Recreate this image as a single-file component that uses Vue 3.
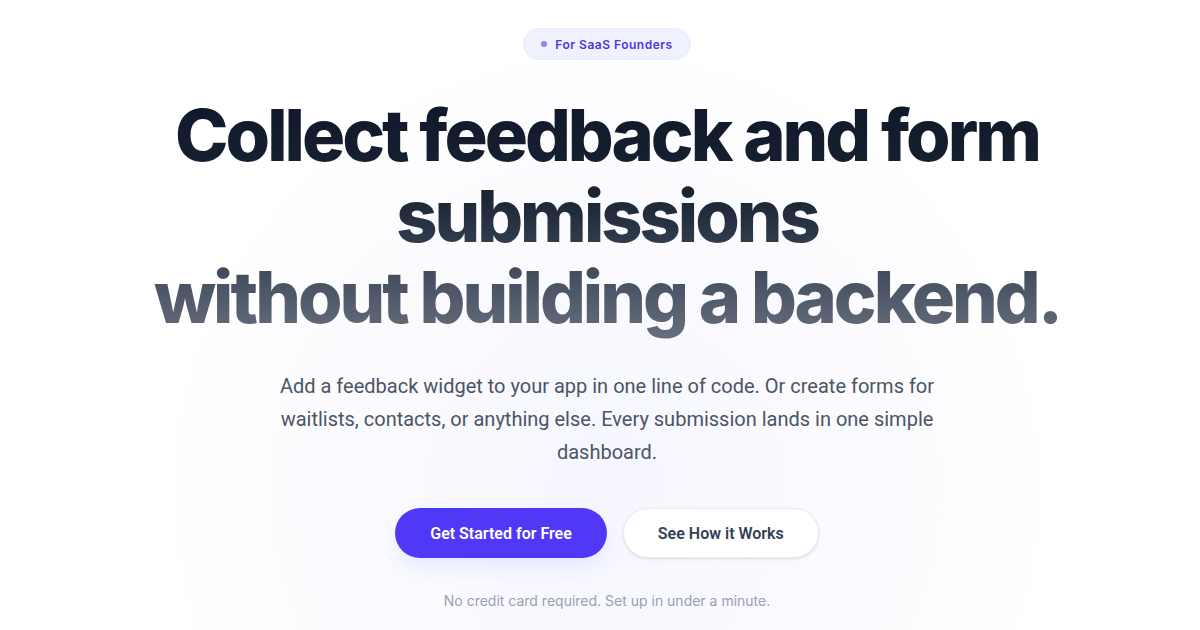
<script setup>
import { ref } from "vue";

const badge = ref("For SaaS Founders");
const note = ref("No credit card required. Set up in under a minute.");
</script>

<template>
    <main class="hero">
        <div class="badge">
            <span class="dot"></span>
            {{ badge }}
        </div>

        <h1>
            <span class="line">Collect feedback and form submissions</span>
            <span class="line">without building a backend.</span>
        </h1>

        <p class="lead">
            Add a feedback widget to your app in one line of code. Or create forms for waitlists,
            contacts, or anything else. Every submission lands in one simple dashboard.
        </p>

        <div class="actions">
            <button type="button" class="btn primary">Get Started for Free</button>
            <button type="button" class="btn secondary">See How it Works</button>
        </div>

        <p class="note">{{ note }}</p>
    </main>
</template>

<style>
body {
    margin: 0;
    background: #ffffff;
}
</style>

<style scoped>
.hero {
    display: flex;
    flex-direction: column;
    align-items: center;
    box-sizing: border-box;
    min-height: 100vh;
    padding: 28px 120px 20px 134px;
    overflow: hidden;
    font-family: Inter, sans-serif;
    text-align: center;
    background: radial-gradient(circle 460px at 50.5% 490px, #f6f6ff 0%, #fafaff 50%, #ffffff 100%);
}

.badge {
    display: flex;
    align-items: center;
    gap: 8px;
    box-sizing: border-box;
    height: 32px;
    padding: 0 17px;
    border: 1px solid #e6edff;
    border-radius: 16px;
    background: #eef2ff;
    color: #4f39d6;
    font-size: 12px;
    font-weight: 600;
    letter-spacing: 0.5px;
}

.dot {
    width: 6px;
    height: 6px;
    border-radius: 50%;
    background: #8f83f5;
}

h1 {
    max-width: 940px;
    margin: 34px 0 0;
    padding-bottom: 8px;
    font-size: 72px;
    font-weight: 800;
    line-height: 81px;
    letter-spacing: -3px;
    color: transparent;
    background: linear-gradient(to bottom, #0f172a 0%, #1a2433 40%, #2b3646 55%, #4b5565 77%, #6b7280 100%);
    background-clip: text;
    -webkit-background-clip: text;
}

.line {
    display: block;
}

.lead {
    max-width: 672px;
    margin: 25px 0 0;
    color: #4b5565;
    font-family: Roboto, sans-serif;
    font-size: 20px;
    line-height: 33px;
}

.actions {
    display: flex;
    gap: 16px;
    margin-top: 39px;
}

.btn {
    height: 50px;
    padding: 0 34px;
    border: 1px solid transparent;
    border-radius: 25px;
    font-family: Roboto, sans-serif;
    font-size: 16px;
    font-weight: 600;
    cursor: pointer;
}

.primary {
    background: #4f39f6;
    color: #ffffff;
    box-shadow: 0 10px 20px -3px #dfe6ff;
}

.secondary {
    border-color: #e8ebf2;
    background: #ffffff;
    color: #334155;
    box-shadow: 0 1px 3px rgba(15, 23, 42, 0.12);
}

.note {
    margin: 32px 0 0;
    color: #98a1ae;
    font-size: 14px;
    line-height: 22px;
}
</style>
